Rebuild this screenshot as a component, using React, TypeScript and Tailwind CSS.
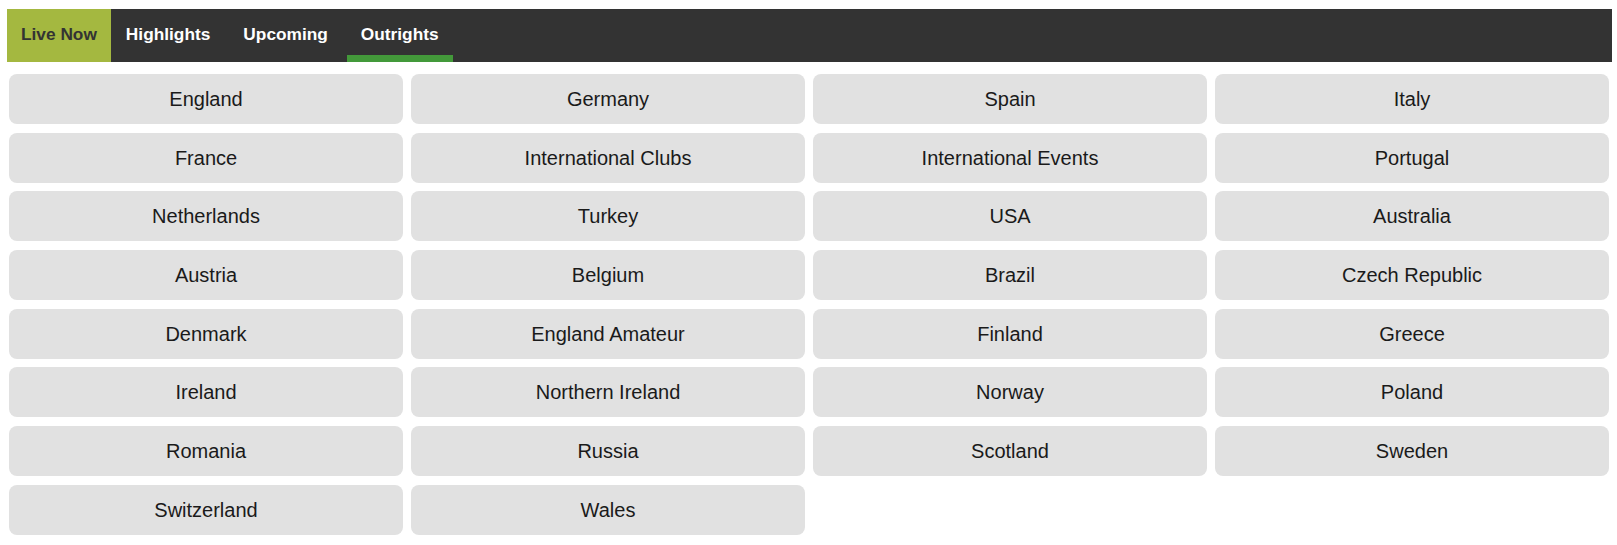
import React from "react";

const items = [
  "England", "Germany", "Spain", "Italy",
  "France", "International Clubs", "International Events", "Portugal",
  "Netherlands", "Turkey", "USA", "Australia",
  "Austria", "Belgium", "Brazil", "Czech Republic",
  "Denmark", "England Amateur", "Finland", "Greece",
  "Ireland", "Northern Ireland", "Norway", "Poland",
  "Romania", "Russia", "Scotland", "Sweden",
  "Switzerland", "Wales",
];

export default function App() {
  return (
    <div
      className="bg-white min-h-[545px] pt-[9px] pl-[7px]"
      style={{ fontFamily: '"Liberation Sans", Arial, sans-serif' }}
    >
      <nav className="flex w-[1605px] h-[53px] bg-[#333333] text-[17.3px] font-bold leading-[20px]">
        <a className="flex h-full px-[14px] pt-[15px] bg-[#a4b840] text-[#333333]">Live Now</a>
        <a className="flex h-full px-[14px] pt-[15px] ml-[1px] text-white">Highlights</a>
        <a className="flex h-full px-[14px] pt-[15px] ml-[5px] text-white">Upcoming</a>
        <a className="flex h-full px-[14px] pt-[15px] ml-[5px] text-white shadow-[inset_0_-7px_0_#43993a]">Outrights</a>
      </nav>
      <div className="grid grid-cols-4 gap-x-[8px] gap-y-[8.7px] w-[1600px] ml-[2px] mt-[12px]">
        {items.map((t) => (
          <div
            key={t}
            className="flex h-[50px] items-center justify-center rounded-[8px] bg-[#e1e1e1] text-[20px] text-[#1a1a1a]"
          >
            {t}
          </div>
        ))}
      </div>
    </div>
  );
}
